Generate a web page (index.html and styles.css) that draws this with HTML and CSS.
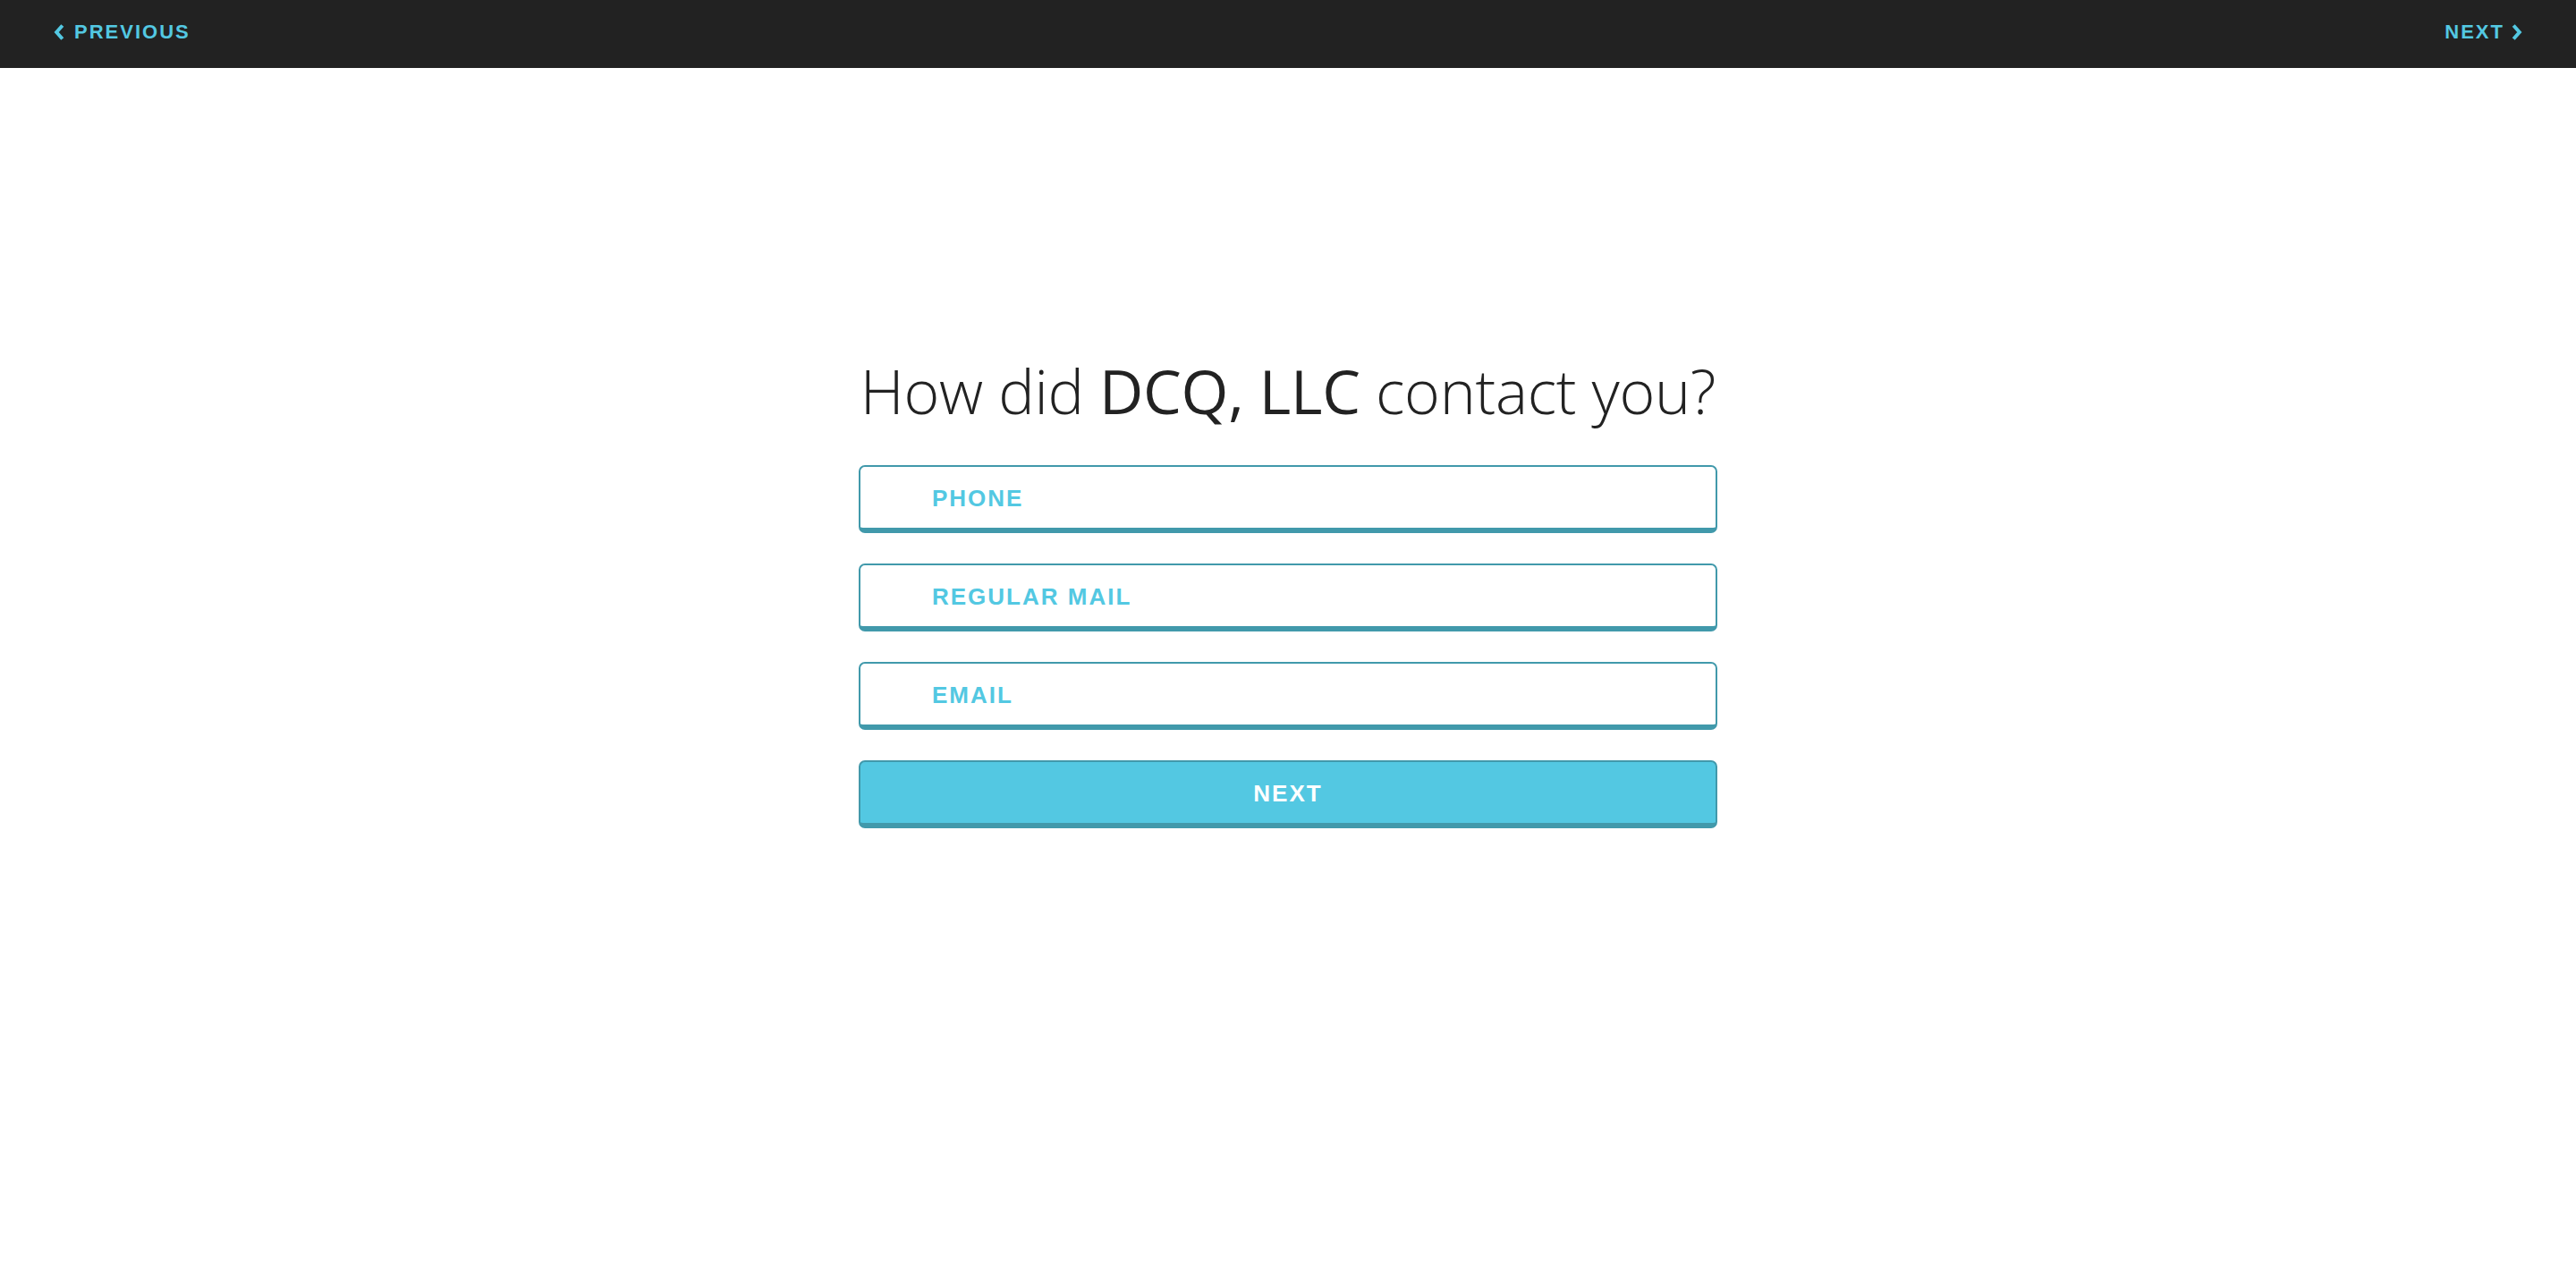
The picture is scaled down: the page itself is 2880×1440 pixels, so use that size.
FILE: index.html
```html
<!DOCTYPE html>
<html lang="en">
<head>
<meta charset="utf-8">
<title>How did DCQ, LLC contact you?</title>
<link rel="stylesheet" href="styles.css">
</head>
<body>
<header class="topbar">
  <a class="nav-link prev" href="#"><svg class="chev" viewBox="0 0 12 18" width="12" height="18"><path d="M9.8 1.5 L3.2 9 L9.8 16.5" fill="none" stroke="currentColor" stroke-width="4" stroke-linejoin="miter"/></svg><span>PREVIOUS</span></a>
  <a class="nav-link next" href="#"><span>NEXT</span><svg class="chev" viewBox="0 0 12 18" width="12" height="18"><path d="M2.2 1.5 L8.8 9 L2.2 16.5" fill="none" stroke="currentColor" stroke-width="4" stroke-linejoin="miter"/></svg></a>
</header>
<main class="content">
  <section class="question">
    <h1 class="title">How did <strong>DCQ, LLC</strong> contact you?</h1>
    <div class="options">
      <button class="option">PHONE</button>
      <button class="option">REGULAR MAIL</button>
      <button class="option">EMAIL</button>
      <button class="submit">NEXT</button>
    </div>
  </section>
</main>
</body>
</html>
```
FILE: styles.css
```css
* { box-sizing: border-box; }
html, body { margin: 0; padding: 0; background: #fff; }
body { font-family: "Liberation Sans", Arial, sans-serif; }

.topbar {
  height: 76px;
  background: #222222;
  display: flex;
  align-items: center;
  justify-content: space-between;
  padding: 0 60px 0 60px;
}
.nav-link {
  color: #53c8e2;
  text-decoration: none;
  font-weight: 700;
  font-size: 22px;
  letter-spacing: 2px;
  display: flex;
  align-items: center;
  gap: 11px;
  margin-top: -4px;
}
.nav-link.next { gap: 8px; }
.chev { display: block; width: 12px; height: 18px; }

.content {
  display: flex;
  justify-content: center;
  padding-top: 321px;
}
.question { width: 960px; }
.title {
  margin: 0 0 43px 0;
  font-family: "Open Sans", sans-serif;
  font-weight: 300;
  font-size: 68px;
  line-height: 80px;
  color: #222;
  text-align: center;
  white-space: nowrap;
  letter-spacing: -0.3px;
}
.title strong { font-weight: 400; }

.options { display: flex; flex-direction: column; gap: 34px; }
.option, .submit {
  height: 76px;
  border: 2px solid #4199ab;
  border-bottom-width: 6px;
  border-radius: 7px;
  font-family: "Liberation Sans", Arial, sans-serif;
  font-weight: 700;
  font-size: 26px;
  letter-spacing: 2px;
  cursor: pointer;
  padding: 3px 0 0 0;
}
.option {
  background: #fff;
  color: #53c8e2;
  text-align: left;
  padding-left: 80px;
}
.submit {
  background: #53c8e2;
  color: #fff;
  text-align: center;
}
```
